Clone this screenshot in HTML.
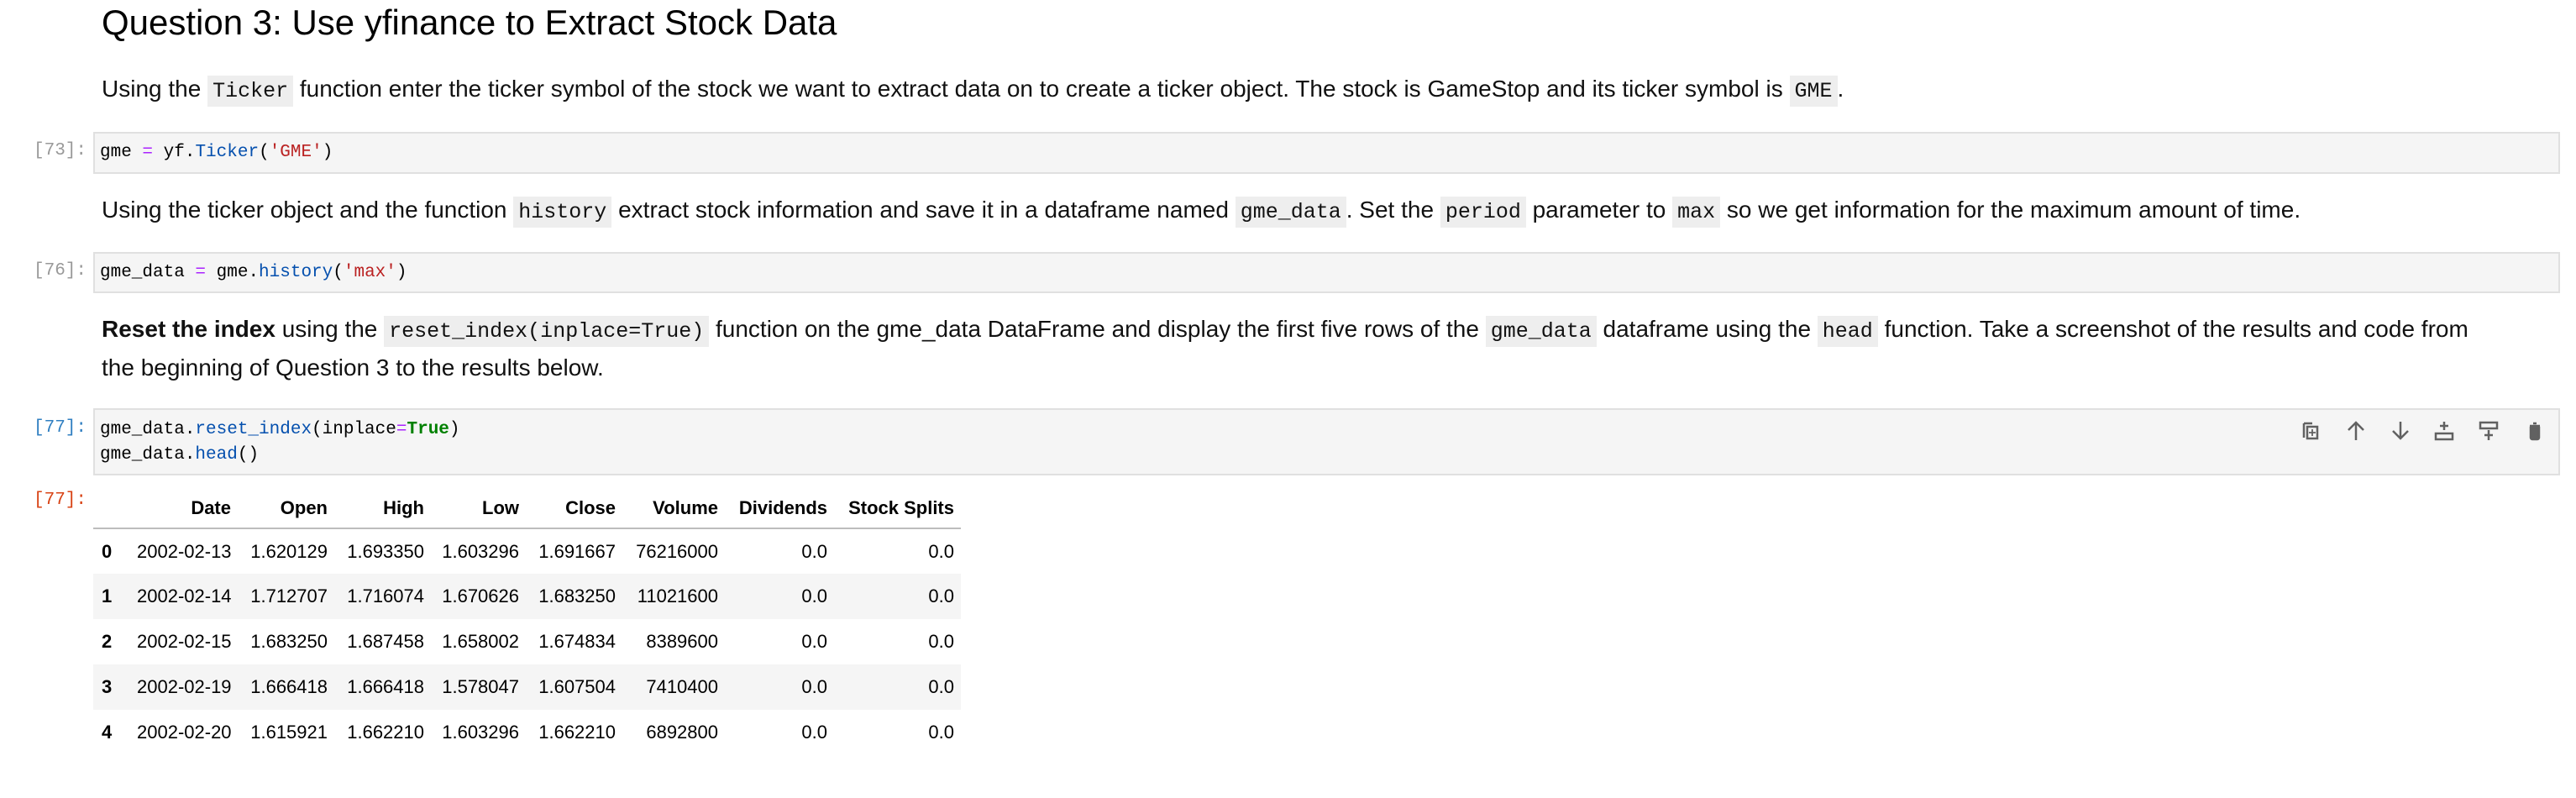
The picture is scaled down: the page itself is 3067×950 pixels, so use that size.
<!DOCTYPE html>
<html><head><meta charset="utf-8"><style>
*{margin:0;padding:0;box-sizing:border-box}
body{width:3067px;height:950px;background:#fff;position:relative;overflow:hidden;font-family:"Liberation Sans",sans-serif;color:#000}
.a{position:absolute;white-space:nowrap}
h1{position:absolute;left:121px;top:0;font-weight:normal;font-size:42px;line-height:54px;color:#000}
.p{position:absolute;left:121px;font-size:28px;line-height:43px;white-space:nowrap;color:#111}
code{font-family:"Liberation Mono",monospace;font-size:25px;background:#eee;padding:4px 6px;}
.cell{position:absolute;left:111px;width:2937px;background:#f5f5f5;border:2px solid #e0e0e0}
.code{position:absolute;left:119px;font-family:"Liberation Mono",monospace;font-size:21px;line-height:30px;white-space:pre;color:#000}
.pr{position:absolute;left:40px;font-family:"Liberation Mono",monospace;font-size:21px;color:#999}
.b{color:#0550ae}.s{color:#ba2121}.o{color:#aa22ff}.g{color:#008000;font-weight:bold}
table{position:absolute;left:111px;top:581px;border-collapse:collapse;font-size:22px;width:1033px;table-layout:fixed;white-space:nowrap}
th{font-weight:bold;text-align:right;height:48px;padding:0 8px;vertical-align:middle}
thead tr{border-bottom:2px solid #bdbdbd}
td{text-align:right;height:54px;padding:0 8px}
tbody tr:nth-child(even){background:#f5f5f5}
td:first-child{text-align:left;font-weight:bold;padding-left:10px}
</style></head><body>
<h1>Question 3: Use yfinance to Extract Stock Data</h1>
<div class="p" style="top:84px">Using the <code>Ticker</code> function enter the ticker symbol of the stock we want to extract data on to create a ticker object. The stock is GameStop and its ticker symbol is <code>GME</code>.</div>
<div class="cell" style="top:157px;height:50px"></div>
<div class="pr" style="top:168px">[73]:</div>
<div class="code" style="top:167px">gme <span class="o">=</span> yf<span>.</span><span class="b">Ticker</span>(<span class="s">'GME'</span>)</div>
<div class="p" style="top:228px">Using the ticker object and the function <code>history</code> extract stock information and save it in a dataframe named <code>gme_data</code>. Set the <code>period</code> parameter to <code>max</code> so we get information for the maximum amount of time.</div>
<div class="cell" style="top:300px;height:49px"></div>
<div class="pr" style="top:311px">[76]:</div>
<div class="code" style="top:310px">gme_data <span class="o">=</span> gme.<span class="b">history</span>(<span class="s">'max'</span>)</div>
<div class="p" style="top:370px"><b>Reset the index</b> using the <code>reset_index(inplace=True)</code> function on the gme_data DataFrame and display the first five rows of the <code>gme_data</code> dataframe using the <code>head</code> function. Take a screenshot of the results and code from<br>the beginning of Question 3 to the results below.</div>
<div class="cell" style="top:486px;height:80px"></div>
<div class="pr" style="top:498px;color:#307fc1">[77]:</div>
<div class="code" style="top:497px">gme_data.<span class="b">reset_index</span>(inplace<span class="o">=</span><span class="g">True</span>)
gme_data.<span class="b">head</span>()</div>
<svg class="a" style="left:2735px;top:498px" width="300" height="30" viewBox="0 0 300 30" fill="none" stroke="#616161" stroke-width="2.5">
<path d="M8 6v17h0M8 6h10"/><rect x="12" y="10" width="12" height="14"/><path d="M18 13v8M14 17h8" stroke-width="1.8"/>
<path d="M70 26V6M61 14l9-9 9 9"/>
<path d="M123 4v20M114 15l9 9 9-9"/>
<rect x="165" y="18" width="20" height="7"/><path d="M175 4v10M170 9h10"/>
<rect x="218" y="5" width="20" height="7"/><path d="M228 14v12M223 20h10"/>
<path d="M277 9h12M281 6h4" /><path d="M278 11h10v12a2 2 0 0 1-2 2h-6a2 2 0 0 1-2-2z" fill="#616161"/>
</svg>
<div class="pr" style="top:584px;color:#d84315">[77]:</div>
<table><colgroup><col style="width:44px"><col style="width:128px"><col style="width:115px"><col style="width:115px"><col style="width:113px"><col style="width:115px"><col style="width:122px"><col style="width:130px"><col style="width:151px"></colgroup>
<thead><tr><th></th><th>Date</th><th>Open</th><th>High</th><th>Low</th><th>Close</th><th>Volume</th><th>Dividends</th><th>Stock Splits</th></tr></thead>
<tbody>
<tr><td>0</td><td>2002-02-13</td><td>1.620129</td><td>1.693350</td><td>1.603296</td><td>1.691667</td><td>76216000</td><td>0.0</td><td>0.0</td></tr>
<tr><td>1</td><td>2002-02-14</td><td>1.712707</td><td>1.716074</td><td>1.670626</td><td>1.683250</td><td>11021600</td><td>0.0</td><td>0.0</td></tr>
<tr><td>2</td><td>2002-02-15</td><td>1.683250</td><td>1.687458</td><td>1.658002</td><td>1.674834</td><td>8389600</td><td>0.0</td><td>0.0</td></tr>
<tr><td>3</td><td>2002-02-19</td><td>1.666418</td><td>1.666418</td><td>1.578047</td><td>1.607504</td><td>7410400</td><td>0.0</td><td>0.0</td></tr>
<tr><td>4</td><td>2002-02-20</td><td>1.615921</td><td>1.662210</td><td>1.603296</td><td>1.662210</td><td>6892800</td><td>0.0</td><td>0.0</td></tr>
</tbody></table>
</body></html>
